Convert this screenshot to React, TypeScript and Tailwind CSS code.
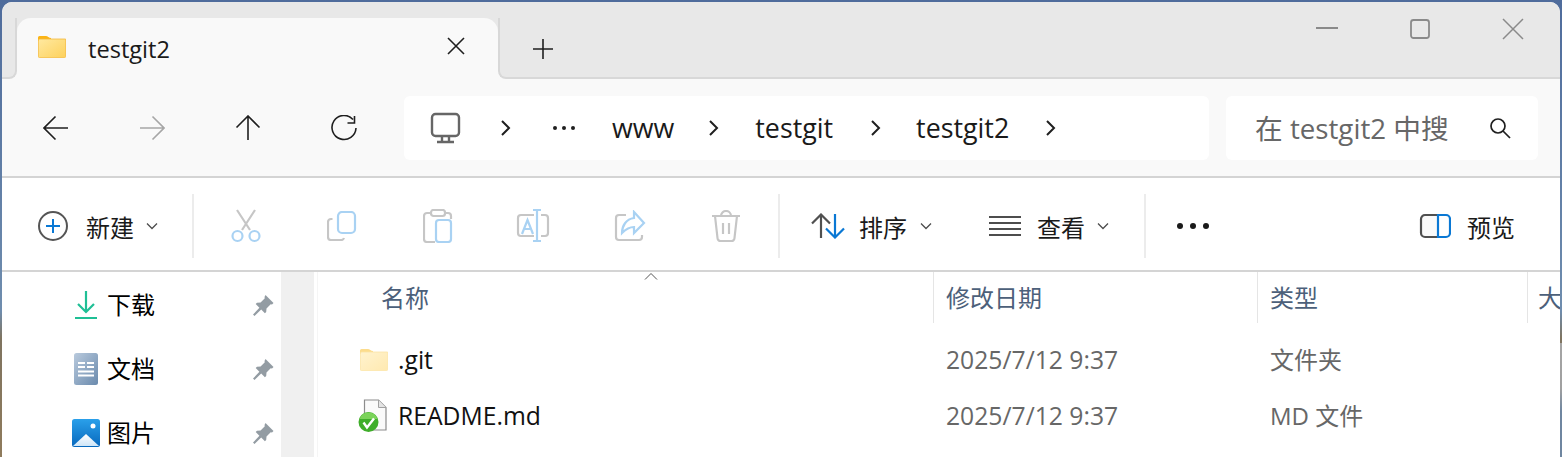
const cjk = "font-['Open_Sans','Noto_Sans_CJK_SC',sans-serif]";

const Chevron = ({ className = "" }: { className?: string }) => (
  <svg width="12" height="18" viewBox="0 0 12 18" fill="none" stroke="#1f1f1f" strokeWidth="2" className={className}>
    <path d="M2 2l7 7-7 7" />
  </svg>
);

const Down = ({ className = "" }: { className?: string }) => (
  <svg width="12" height="8" viewBox="0 0 12 8" fill="none" stroke="#4d4d4d" strokeWidth="1.3" className={className}>
    <path d="M1 1.500l5 5 5-5" />
  </svg>
);

const FolderIcon = ({ faded = false }: { faded?: boolean }) => (
  <svg width="28" height="22" viewBox="0 0 28 22" className="block">
    <defs>
      <linearGradient id={faded ? "fa" : "fb"} x1="0" y1="0" x2="1" y2="1">
        <stop offset="0" stopColor={faded ? "#fff3cf" : "#ffe9a0"} />
        <stop offset="1" stopColor={faded ? "#ffe9b0" : "#fdd15c"} />
      </linearGradient>
    </defs>
    <path d="M0 1.500A1.500 1.500 0 0 1 1.500 0H8c1.500 0 3 2 5 2v3H0z" fill={faded ? "#fcdc8c" : "#fbb416"} />
    <path d="M.4 4.500C.4 3.500 1 3 2 3h25.600v17.500c0 .7-.4 1.100-1.100 1.100h-25c-.7 0-1.100-.4-1.100-1.100z" fill={`url(#${faded ? "fa" : "fb"})`} stroke={faded ? "#fbe3a4" : "#f5b93a"} strokeWidth=".8" />
  </svg>
);

const Pin = () => (
  <svg width="24" height="24" viewBox="0 0 24 24" fill="#939ca3">
    <path d="M14.500 2l8 8-1.500 1.500-1.300-.3-4.200 4.200-.3 3.600-1.300 1.300-3.700-3.700-6.700 6.400-1.500-1.400 6.400-6.800-3.700-3.700 1.300-1.300 3.600-.3 4.200-4.200-.3-1.300z" />
  </svg>
);

const Sep = () => <div className="w-[2px] h-[64px] bg-[#ececec] shrink-0" />;

const Label = ({ children, className = "" }: { children: React.ReactNode; className?: string }) => (
  <span className={`text-[24px] leading-[32px] pt-[4px] whitespace-nowrap ${className}`}>{children}</span>
);

const Crumb = ({ children, className = "" }: { children: React.ReactNode; className?: string }) => (
  <span className={`text-[26.800px] leading-[34px] whitespace-nowrap text-[#1a1a1a] ${className}`}>{children}</span>
);

const Cell = ({ children }: { children: React.ReactNode }) => (
  <div className="w-[96px] shrink-0 flex items-center justify-center">{children}</div>
);

const SideRow = ({ icon, label }: { icon: React.ReactNode; label: string }) => (
  <div className="h-[64px] flex items-center">
    <div className="ml-[66px] w-[36px] flex justify-center shrink-0">{icon}</div>
    <span className="ml-[3px] text-[24px] leading-[32px] text-black">{label}</span>
    <div className="ml-[96px] w-[24px]"><Pin /></div>
  </div>
);

const FileRow = ({ icon, name, date, type }: { icon: React.ReactNode; name: string; date: string; type: string }) => (
  <div className="h-[56px] flex items-center text-[24px]">
    <div className="w-[616px] flex items-center pl-[40px] shrink-0">
      <div className="w-[40px] shrink-0">{icon}</div>
      <span className="text-[24.700px] text-[#111111]">{name}</span>
    </div>
    <div className="w-[324px] pl-[12px] shrink-0 text-[24.700px] text-[#676767]">{date}</div>
    <div className="pl-[12px] text-[#676767] whitespace-nowrap">{type}</div>
  </div>
);

export default function App() {
  return (
    <div className={`relative w-[1562px] h-[457px] overflow-hidden pt-[2px] px-[2px] bg-[linear-gradient(180deg,#4f6c9c_0%,#6f8dae_68%,#7f7460_74%,#8f7b5c_100%)] ${cjk}`}>
      <div className="absolute right-0 top-[343px] w-[2px] h-[114px] bg-[linear-gradient(180deg,#a5a5a5,#a0a0a0_40%,#6f86a0_60%,#6f86a0)]" />
      <div className="h-[455px] rounded-t-[10px] overflow-hidden bg-white flex flex-col">
        {/* title bar */}
        <div className="h-[77px] flex flex-col shrink-0">
          <div className="h-[16px] bg-[#e8e8e8] shrink-0" />
          <div className="h-[61px] flex bg-[linear-gradient(180deg,#e8e8e8_50%,#f9f9f9_50%)]">
            <div className="w-[15px] bg-[#e8e8e8] border-b-2 border-r-2 border-[#d8d8d8] rounded-br-[8px] shrink-0" />
            <div className="w-[481px] bg-[#f9f9f9] rounded-t-[14px] flex items-start pt-[18px] pl-[21px] shrink-0">
              <FolderIcon />
              <span className="ml-[22px] -mt-[2px] text-[23.600px] leading-[30px] text-[#1a1a1a]">testgit2</span>
              <svg width="20" height="20" viewBox="0 0 20 20" stroke="#1f1f1f" strokeWidth="1.600" className="ml-[276px] mt-[0px]">
                <path d="M2 2l16 16M18 2L2 18" />
              </svg>
            </div>
            <div className="flex-1 bg-[#e8e8e8] border-b-2 border-l-2 border-[#d8d8d8] rounded-bl-[8px] relative">
              <svg width="20" height="20" viewBox="0 0 20 20" stroke="#1f1f1f" strokeWidth="1.600" className="absolute left-[33px] top-[21px]">
                <path d="M10 0v20M0 10h20" />
              </svg>
              <svg width="22" height="2" className="absolute left-[816px] top-[9px]"><rect width="22" height="2" fill="#8a8a8a" /></svg>
              <svg width="20" height="22" viewBox="0 0 20 22" fill="none" stroke="#8a8a8a" strokeWidth="1.800" className="absolute left-[910px] top-0">
                <rect x="1" y="2" width="18" height="18" rx="2.500" />
              </svg>
              <svg width="22" height="22" viewBox="0 0 22 22" stroke="#8a8a8a" strokeWidth="1.500" className="absolute left-[1002px] top-[0px]">
                <path d="M1 1l20 20M21 1L1 21" />
              </svg>
            </div>
          </div>
        </div>

        {/* nav bar */}
        <div className="h-[99px] bg-[#f9f9f9] border-b-2 border-[#d4d4d4] flex items-center pl-[6px] shrink-0">
          <Cell>
            <svg width="26" height="26" viewBox="0 0 26 26" fill="none" stroke="#1f1f1f" strokeWidth="1.600"><path d="M25 13H1M12.500 1.500L1 13l11.500 11.500" /></svg>
          </Cell>
          <Cell>
            <svg width="26" height="26" viewBox="0 0 26 26" fill="none" stroke="#a6a6a6" strokeWidth="1.600"><path d="M1 13h24M13.500 1.500L25 13 13.500 24.500" /></svg>
          </Cell>
          <Cell>
            <svg width="26" height="26" viewBox="0 0 26 26" fill="none" stroke="#1f1f1f" strokeWidth="1.600"><path d="M13 25V1M1.500 12.500L13 1l11.500 11.500" /></svg>
          </Cell>
          <Cell>
            <svg width="26" height="26" viewBox="0 0 26 26" fill="none" stroke="#1f1f1f" strokeWidth="1.600"><path d="M22 4.500A12 12 0 1 0 25 13M23.500 1v7h-7" /></svg>
          </Cell>
          <div className="ml-[12px] w-[805px] h-[64px] bg-white rounded-[6px] flex items-center shrink-0">
            <svg width="32" height="32" viewBox="0 0 32 32" fill="none" stroke="#666666" strokeWidth="2.400" className="ml-[26px]">
              <rect x="2" y="2" width="27" height="22" rx="3.500" /><path d="M12 24v5M19 24v5M7 30h17" />
            </svg>
            <Chevron className="ml-[38px]" />
            <span className="ml-[41px] w-[30px] flex gap-[5px]">
              <i className="block w-[4px] h-[4px] rounded-full bg-[#1f1f1f]" />
              <i className="block w-[4px] h-[4px] rounded-full bg-[#1f1f1f]" />
              <i className="block w-[4px] h-[4px] rounded-full bg-[#1f1f1f]" />
            </span>
            <Crumb className="ml-[29px]">www</Crumb>
            <Chevron className="ml-[34px]" />
            <Crumb className="ml-[35px]">testgit</Crumb>
            <Chevron className="ml-[37px]" />
            <Crumb className="ml-[34px]">testgit2</Crumb>
            <Chevron className="ml-[36px]" />
          </div>
          <div className="ml-[17px] w-[312px] h-[64px] bg-white rounded-[6px] flex items-center pl-[29px] shrink-0">
            <span className="text-[27.700px] leading-[34px] whitespace-nowrap text-[#676767]">在 testgit2 中搜</span>
            <svg width="22" height="22" viewBox="0 0 22 22" fill="none" stroke="#1f1f1f" strokeWidth="1.700" className="ml-auto mr-[27px]">
              <circle cx="9" cy="9" r="7" /><path d="M14 14l7 7" />
            </svg>
          </div>
        </div>

        {/* toolbar */}
        <div className="h-[94px] bg-white border-b-2 border-[#d4d4d4] flex items-center pt-[4px] shrink-0">
          <svg width="32" height="32" viewBox="0 0 32 32" fill="none" className="ml-[35px]">
            <circle cx="16" cy="16" r="14" stroke="#555555" strokeWidth="2" />
            <path d="M16 9v14M9 16h14" stroke="#0a78d4" strokeWidth="2" />
          </svg>
          <Label className="ml-[17px] text-[#1a1a1a]">新建</Label>
          <Down className="ml-[12px]" />
          <div className="ml-[34px]"><Sep /></div>
          {/* cut */}
          <svg width="30" height="34" viewBox="0 0 30 34" fill="none" strokeWidth="2.200" className="ml-[37px]">
            <path d="M6 1l13 20M24 1L11 21" stroke="#c6c6c6" />
            <circle cx="6.500" cy="27" r="5" stroke="#a9d2f3" /><circle cx="23.500" cy="27" r="5" stroke="#a9d2f3" />
          </svg>
          {/* copy */}
          <svg width="30" height="30" viewBox="0 0 30 30" fill="none" strokeWidth="2.200" className="ml-[66px]">
            <path d="M5.500 8H4a3 3 0 0 0-3 3v15a3 3 0 0 0 3 3h10a3 3 0 0 0 3-2" stroke="#c6c6c6" />
            <rect x="11" y="1" width="17" height="21" rx="4" stroke="#a9d2f3" />
          </svg>
          {/* paste */}
          <svg width="30" height="34" viewBox="0 0 30 34" fill="none" strokeWidth="2.200" className="ml-[66px]">
            <path d="M8 4H4a3 3 0 0 0-3 3v23a3 3 0 0 0 3 3h8M22 4h3a3 3 0 0 1 3 3v3" stroke="#c6c6c6" />
            <rect x="8" y="1" width="14" height="6" rx="2.500" stroke="#c6c6c6" />
            <rect x="13" y="11" width="15" height="22" rx="3" stroke="#a9d2f3" />
          </svg>
          {/* rename */}
          <svg width="34" height="34" viewBox="0 0 34 34" fill="none" strokeWidth="2.200" className="ml-[63px]">
            <path d="M18 6H5a3 3 0 0 0-3 3v15a3 3 0 0 0 3 3h13M25 6h4a3 3 0 0 1 3 3v15a3 3 0 0 1-3 3h-4" stroke="#c6c6c6" />
            <path d="M17 1h8M21 1v31M17 32h8M6 25l5.500-14 5.500 14M8 20h7" stroke="#a9d2f3" />
          </svg>
          {/* share */}
          <svg width="32" height="32" viewBox="0 0 32 32" fill="none" strokeWidth="2.200" className="ml-[64px]">
            <path d="M12 5H5a3 3 0 0 0-3 3v19a3 3 0 0 0 3 3h20a3 3 0 0 0 3-3v-2" stroke="#c6c6c6" />
            <path d="M20 2l10 11-10 10v-6c-5 0-8 2-12 6 0-7 4-14 12-15z" stroke="#a9d2f3" />
          </svg>
          {/* delete */}
          <svg width="30" height="32" viewBox="0 0 30 32" fill="none" stroke="#c6c6c6" strokeWidth="2.200" className="ml-[65px]">
            <path d="M1 6h28M10 6a5 5 0 0 1 10 0M4 6l2.500 22a3 3 0 0 0 3 3h11a3 3 0 0 0 3-3L26 6M12 13v11M18 13v11" />
          </svg>
          <div className="ml-[37px]"><Sep /></div>
          <svg width="34" height="26" viewBox="0 0 34 26" fill="none" strokeWidth="2.200" className="ml-[31px]">
            <path d="M10 25V1.500M1 10.500l9-9 9 9" stroke="#505050" />
            <path d="M24 1v23.500M15 15.500l9 9 9-9" stroke="#0a78d4" />
          </svg>
          <Label className="ml-[14px] text-[#1a1a1a]">排序</Label>
          <Down className="ml-[13px]" />
          <svg width="32" height="22" viewBox="0 0 32 22" stroke="#4d4d4d" strokeWidth="2" className="ml-[57px]">
            <path d="M0 2h32M0 8h32M0 14h32M0 20h32" />
          </svg>
          <Label className="ml-[16px] text-[#1a1a1a]">查看</Label>
          <Down className="ml-[12px]" />
          <div className="ml-[35px]"><Sep /></div>
          <span className="ml-[31px] flex gap-[7px]">
            <i className="block w-[6px] h-[6px] rounded-full bg-[#1a1a1a]" />
            <i className="block w-[6px] h-[6px] rounded-full bg-[#1a1a1a]" />
            <i className="block w-[6px] h-[6px] rounded-full bg-[#1a1a1a]" />
          </span>
          <svg width="32" height="26" viewBox="0 0 32 26" fill="none" strokeWidth="2.200" className="ml-[210px]">
            <path d="M19 2H6a4 4 0 0 0-4 4v14a4 4 0 0 0 4 4h13" stroke="#505050" fill="#fafafa" />
            <path d="M19 1v24M19 2h8a4 4 0 0 1 4 4v14a4 4 0 0 1-4 4h-8" stroke="#0a78d4" />
          </svg>
          <Label className="ml-[16px] text-[#1a1a1a]">预览</Label>
        </div>

        {/* content */}
        <div className="flex-1 flex min-h-0">
          <div className="w-[279px] shrink-0 pt-[1px] bg-white">
            <SideRow
              label="下载"
              icon={
                <svg width="22" height="28" viewBox="0 0 22 28" fill="none" stroke="#1fbf95" strokeWidth="2.200">
                  <path d="M11 0v21M3 13l8 8 8-8M0 27h22" />
                </svg>
              }
            />
            <SideRow
              label="文档"
              icon={
                <svg width="24" height="32" viewBox="0 0 24 32">
                  <defs>
                    <linearGradient id="doc" x1="0" y1="0" x2="1" y2="1">
                      <stop offset="0" stopColor="#b9cadd" /><stop offset="1" stopColor="#6a8aad" />
                    </linearGradient>
                  </defs>
                  <rect width="24" height="32" rx="2.500" fill="url(#doc)" />
                  <path d="M4 9h7v2H4zM4 13h7v2H4zM13 9h7v2h-7zM13 13h7v2h-7zM4 17.500h16v2H4zM4 21.500h16v2H4z" fill="#fff" />
                </svg>
              }
            />
            <SideRow
              label="图片"
              icon={
                <svg width="28" height="28" viewBox="0 0 28 28">
                  <defs>
                    <linearGradient id="pic" x1="0" y1="0" x2="0" y2="1">
                      <stop offset="0" stopColor="#2aa0ea" /><stop offset="1" stopColor="#0868bd" />
                    </linearGradient>
                    <linearGradient id="mt" x1="0" y1="0" x2="0" y2="1">
                      <stop offset="0" stopColor="#ffffff" /><stop offset="1" stopColor="#cfe6f8" />
                    </linearGradient>
                  </defs>
                  <rect width="28" height="28" rx="2.500" fill="url(#pic)" />
                  <path d="M1 27L14 15l13 12z" fill="url(#mt)" />
                  <circle cx="21" cy="7" r="2.500" fill="#ffffff" />
                </svg>
              }
            />
          </div>
          <div className="w-[33px] bg-[#f0f0f0] shrink-0" />
          <div className="w-[3px] bg-white shrink-0" />
          <div className="w-[1px] bg-[#f5f5f5] shrink-0" />
          <div className="flex-1 min-w-0 overflow-hidden relative">
            <svg width="14" height="7" viewBox="0 0 14 7" fill="none" stroke="#555555" strokeWidth="1" className="absolute left-[326px] top-[1px]">
              <path d="M1 6.500l6-6 6 6" />
            </svg>
            <div className="h-[51px] flex text-[24px] text-[#4c607a]">
              <div className="w-[615px] pl-[63px] pt-[8px] shrink-0">名称</div>
              <div className="w-[324px] pl-[12px] pt-[8px] border-l-[1px] border-[#e5e5e5] shrink-0">修改日期</div>
              <div className="w-[270px] pl-[12px] pt-[8px] border-l-[1px] border-[#e5e5e5] shrink-0">类型</div>
              <div className="pl-[10px] pt-[8px] border-l-[1px] border-[#e5e5e5] flex-1 whitespace-nowrap overflow-hidden">大小</div>
            </div>
            <div className="pt-[9px]">
              <FileRow icon={<div className="ml-[2px]"><FolderIcon faded /></div>} name=".git" date="2025/7/12 9:37" type="文件夹" />
              <FileRow
                icon={
                  <svg width="30" height="34" viewBox="0 0 30 34">
                    <path d="M6.500 1h14l7.500 7.500V31H6.500z" fill="#fafafa" stroke="#8c8c8c" strokeWidth="1.200" />
                    <path d="M20.500 1v7.500H28" fill="#e4e4e4" stroke="#a0a0a0" strokeWidth="1" />
                    <circle cx="10.500" cy="23" r="10" fill="#3fae2a" />
                    <path d="M1.500 20a9.500 9.500 0 0 1 18 0z" fill="#7bd35a" />
                    <path d="M5.500 23.500l3.500 5 7-9" fill="none" stroke="#ffffff" strokeWidth="2.400" />
                  </svg>
                }
                name="README.md"
                date="2025/7/12 9:37"
                type="MD 文件"
              />
            </div>
          </div>
        </div>
      </div>
    </div>
  );
}
